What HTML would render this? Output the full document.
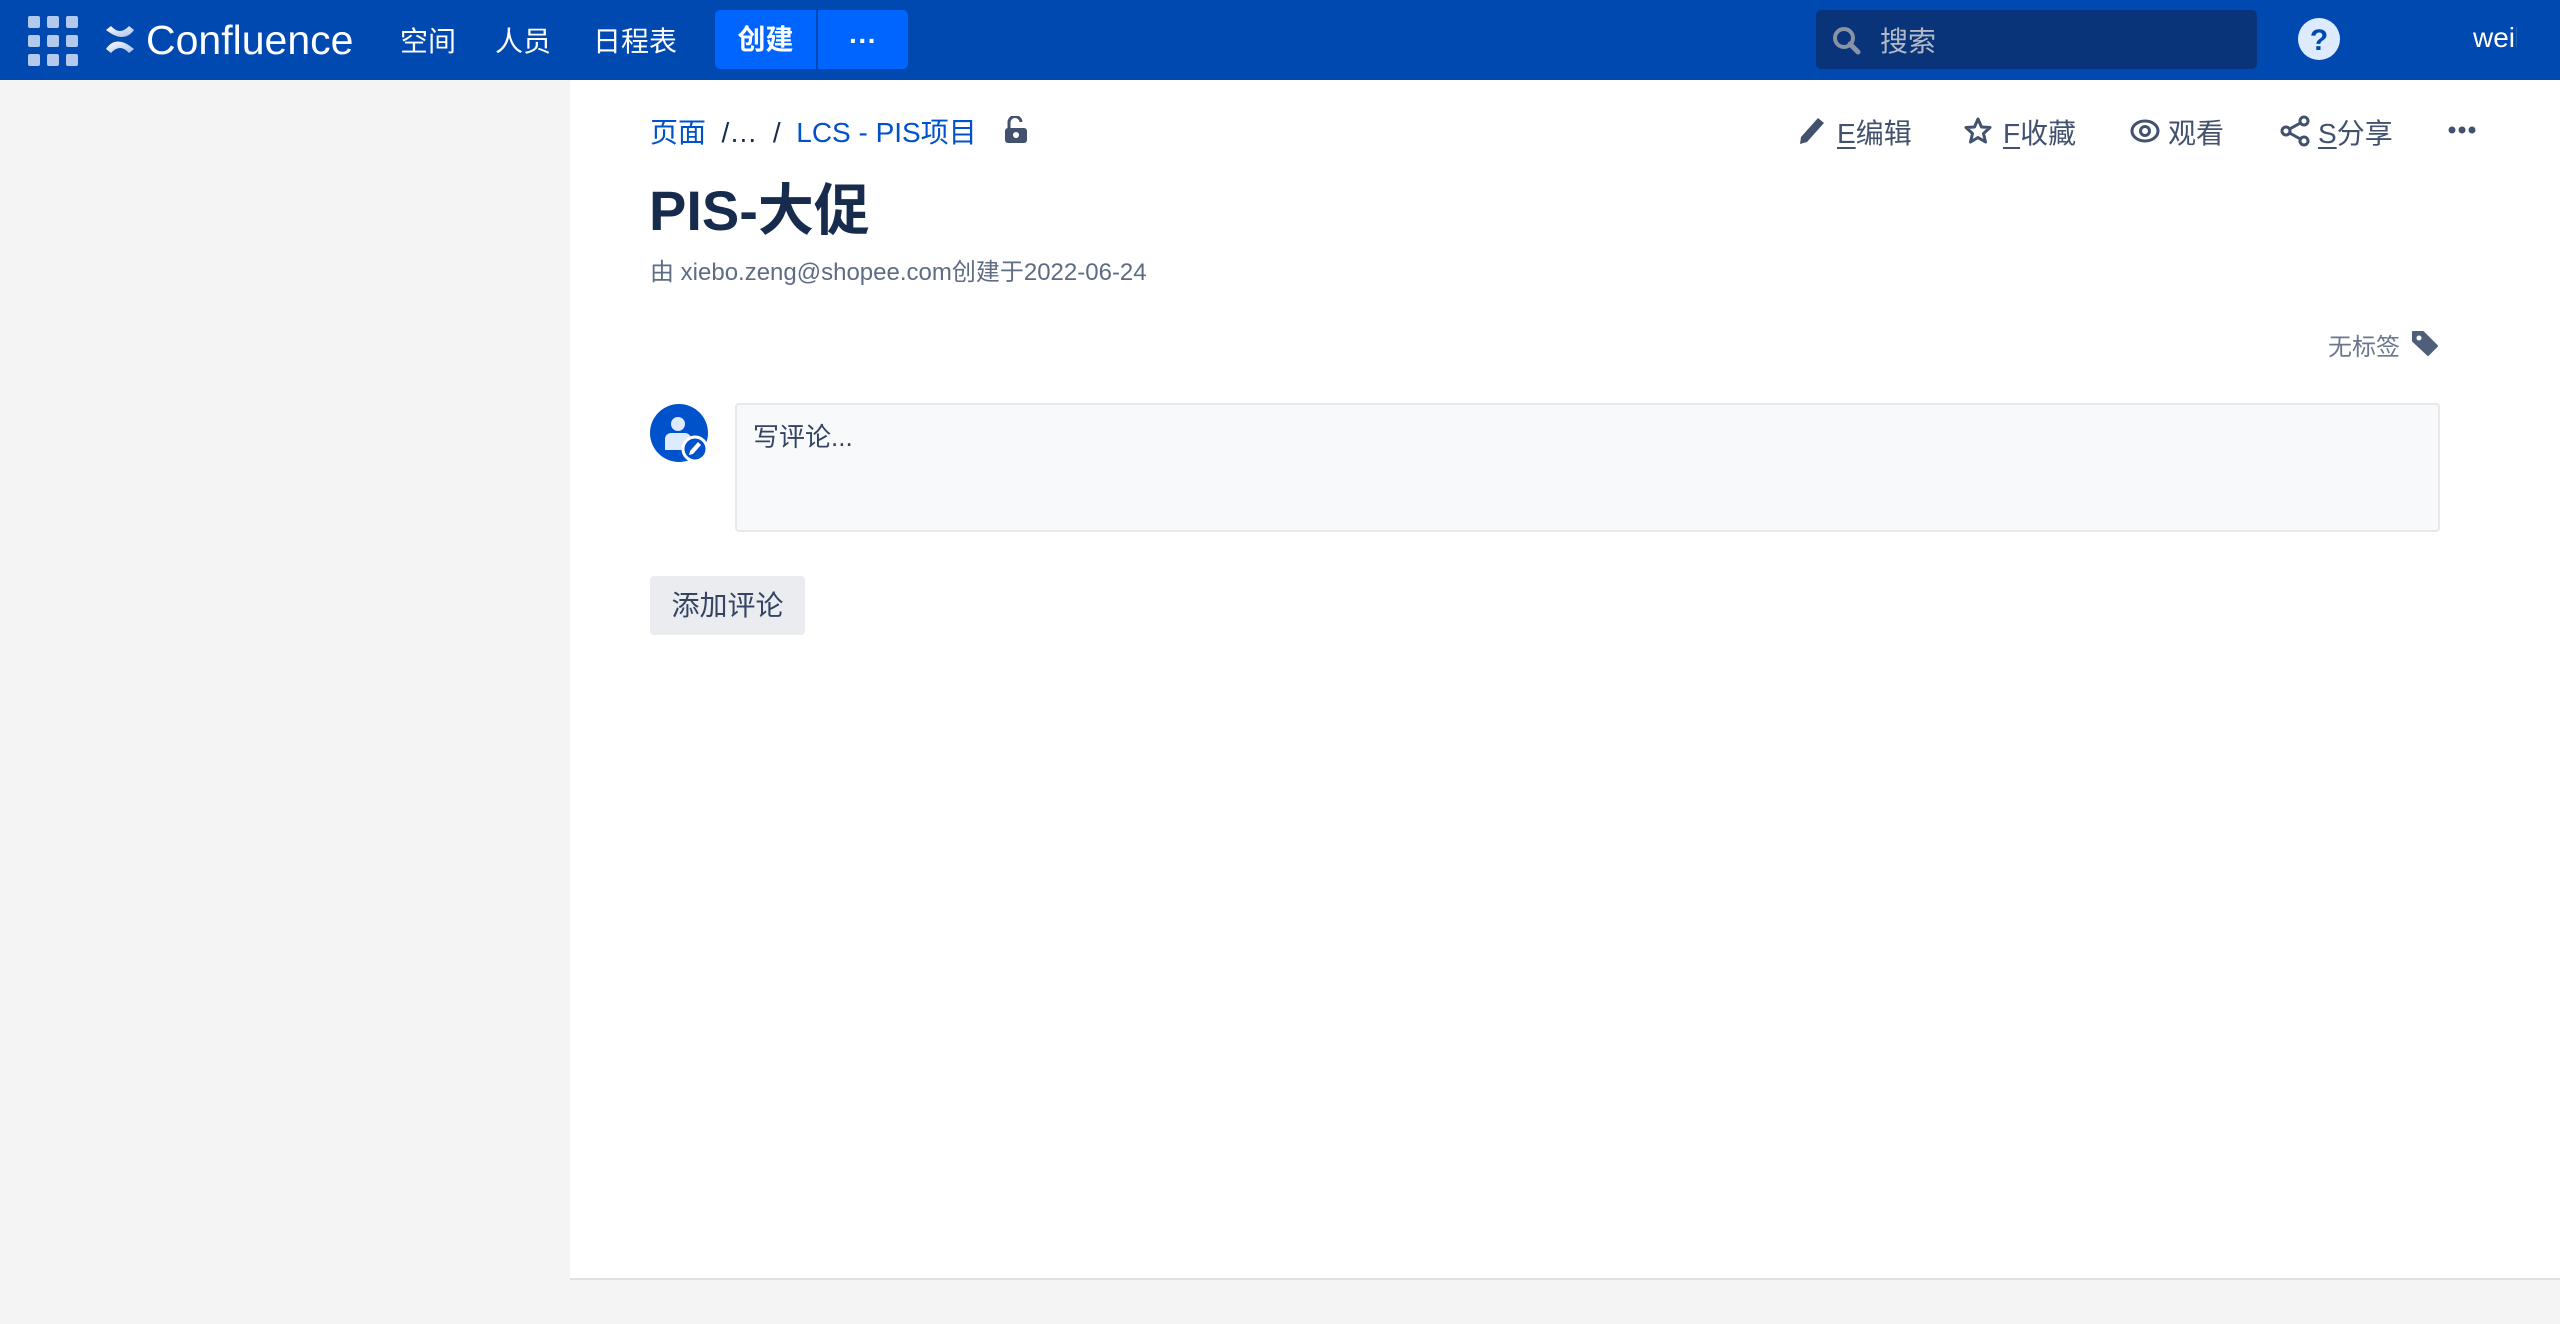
<!DOCTYPE html>
<html><head><meta charset="utf-8"><style>
*{margin:0;padding:0;box-sizing:border-box}
body{width:2560px;height:1324px;background:#f4f4f4;font-family:"Liberation Sans","Noto Sans CJK SC",sans-serif;position:relative;overflow:hidden;color:#172b4d}
.a{position:absolute;white-space:nowrap}
#hdr{position:absolute;left:0;top:0;width:2560px;height:80px;background:#0049b0}
#main{position:absolute;left:570px;top:80px;width:1990px;background:#fff;border-bottom:2px solid #dfe1e6;height:1200px}
.nav{color:#fff;font-size:28px;top:20px}
.act{color:#42526e;font-size:28px;top:112px}
.act u{text-decoration:underline;text-underline-offset:4px}
</style></head><body>
<div id="hdr">
 <svg class="a" style="left:28px;top:16px" width="50" height="50" viewBox="0 0 50 50" fill="#b3c9ee">
  <rect x="0" y="0" width="12" height="12" rx="2"/><rect x="19" y="0" width="12" height="12" rx="2"/><rect x="38" y="0" width="12" height="12" rx="2"/>
  <rect x="0" y="19" width="12" height="12" rx="2"/><rect x="19" y="19" width="12" height="12" rx="2"/><rect x="38" y="19" width="12" height="12" rx="2"/>
  <rect x="0" y="38" width="12" height="12" rx="2"/><rect x="19" y="38" width="12" height="12" rx="2"/><rect x="38" y="38" width="12" height="12" rx="2"/>
 </svg>
 <svg class="a" style="left:104px;top:22px" width="32" height="34" viewBox="0 0 32 34">
  <defs><linearGradient id="g" x1="0" y1="0" x2="1" y2="1"><stop offset="0" stop-color="#fff"/><stop offset="1" stop-color="#a8bde6"/></linearGradient></defs>
  <path d="M2 8 L7 4 Q16 14 25 4 L30 8 Q20 22 2 8Z" fill="url(#g)"/>
  <path d="M2 27 Q12 12 30 27 L25 31 Q16 21 7 31Z" fill="url(#g)"/>
 </svg>
 <div class="a" style="left:146px;top:17px;color:#fff;font-size:41px">Confluence</div>
 <div class="a nav" style="left:400px">空间</div>
 <div class="a nav" style="left:495px">人员</div>
 <div class="a nav" style="left:593px">日程表</div>
 <div class="a" style="left:715px;top:10px;width:101px;height:59px;background:#0065ff;border-radius:5px 0 0 5px;color:#fff;font-size:28px;font-weight:bold;text-align:center;line-height:59px">创建</div>
 <div class="a" style="left:818px;top:10px;width:90px;height:59px;background:#0065ff;border-radius:0 5px 5px 0;color:#fff;font-size:28px;font-weight:bold;text-align:center;line-height:62px">···</div>
 <div class="a" style="left:1816px;top:10px;width:441px;height:59px;background:#09347a;border-radius:5px"></div>
 <svg class="a" style="left:1832px;top:26px" width="30" height="30" viewBox="0 0 30 30"><circle cx="12" cy="12" r="9" fill="none" stroke="#8993a4" stroke-width="4"/><path d="M18 18 L26 26" stroke="#8993a4" stroke-width="5" stroke-linecap="round"/></svg>
 <div class="a" style="left:1880px;top:20px;color:#b3bac5;font-size:28px">搜索</div>
 <svg class="a" style="left:2298px;top:18px" width="42" height="42" viewBox="0 0 42 42"><circle cx="21" cy="21" r="21" fill="#deebff"/><text x="21" y="32" text-anchor="middle" font-size="30" font-weight="bold" fill="#0049b0" font-family="Liberation Sans">?</text></svg>
 <div class="a" style="left:2473px;top:22px;color:#fff;font-size:28px;width:44px;overflow:hidden">weil</div>
</div>
<div id="main"></div>
<div class="a" style="left:650px;top:111px;font-size:28px;color:#0052cc">页面 <span style="color:#172b4d">&nbsp;/…&nbsp; /</span>&nbsp; LCS - PIS项目</div>
<svg class="a" style="left:1003px;top:116px" width="26" height="28" viewBox="0 0 26 28"><path d="M6 12 V7 a6 6 0 0 1 12 -1" fill="none" stroke="#42526e" stroke-width="3"/><rect x="2" y="12" width="22" height="15" rx="3" fill="#42526e"/><circle cx="13" cy="19" r="3" fill="#fff"/></svg>
<svg class="a" style="left:1798px;top:116px" width="28" height="30" viewBox="0 0 28 30"><path d="M20 2 L26 7 L9 26 L2 28 L3 21Z" fill="#42526e"/></svg>
<div class="a act" style="left:1837px"><u>E</u>编辑</div>
<svg class="a" style="left:1963px;top:116px" width="30" height="30" viewBox="0 0 30 30"><path d="M15 3 L18.5 11 L27 11.5 L20.5 17.5 L22.5 26 L15 21.5 L7.5 26 L9.5 17.5 L3 11.5 L11.5 11Z" fill="none" stroke="#42526e" stroke-width="3" stroke-linejoin="round"/></svg>
<div class="a act" style="left:2003px"><u>F</u>收藏</div>
<svg class="a" style="left:2130px;top:118px" width="30" height="26" viewBox="0 0 30 26"><ellipse cx="15" cy="13" rx="13" ry="10" fill="none" stroke="#42526e" stroke-width="3"/><circle cx="15" cy="13" r="4.5" fill="none" stroke="#42526e" stroke-width="3"/></svg>
<div class="a act" style="left:2168px">观看</div>
<svg class="a" style="left:2280px;top:115px" width="30" height="32" viewBox="0 0 30 32"><path d="M24 6 L6 16 L24 26" fill="none" stroke="#42526e" stroke-width="3"/><circle cx="24" cy="6" r="4" fill="#fff" stroke="#42526e" stroke-width="3"/><circle cx="6" cy="16" r="4" fill="#fff" stroke="#42526e" stroke-width="3"/><circle cx="24" cy="26" r="4" fill="#fff" stroke="#42526e" stroke-width="3"/></svg>
<div class="a act" style="left:2318px"><u>S</u>分享</div>
<svg class="a" style="left:2448px;top:125px" width="28" height="10" viewBox="0 0 28 10" fill="#42526e"><circle cx="4" cy="5" r="3.5"/><circle cx="14" cy="5" r="3.5"/><circle cx="24" cy="5" r="3.5"/></svg>
<div class="a" style="left:649px;top:166px;font-size:56px;font-weight:bold;color:#172b4d">PIS-大促</div>
<div class="a" style="left:650px;top:252px;font-size:24px;color:#5e6c84">由 xiebo.zeng@shopee.com创建于2022-06-24</div>
<div class="a" style="left:2328px;top:327px;font-size:24px;color:#6b778c">无标签</div>
<svg class="a" style="left:2410px;top:329px" width="30" height="28" viewBox="0 0 30 28"><path d="M3 3 H13 L27 17 L18 26 L3 12Z" fill="#505f79" stroke="#505f79" stroke-width="2" stroke-linejoin="round"/><circle cx="9" cy="9" r="2.5" fill="#fff"/></svg>
<svg class="a" style="left:650px;top:404px" width="60" height="60" viewBox="0 0 60 60"><circle cx="29" cy="29" r="29" fill="#0052cc"/><circle cx="28" cy="20" r="7" fill="#deebff"/><path d="M15 46 V35 a6 6 0 0 1 6 -6 H35 a6 6 0 0 1 6 6 V46Z" fill="#deebff"/><circle cx="45" cy="45" r="12" fill="#0052cc" stroke="#fff" stroke-width="3"/><path d="M48 38 L51 41 L43 50 L39 51 L40 47Z" fill="#fff"/></svg>
<div class="a" style="left:735px;top:403px;width:1705px;height:129px;background:#f8f9fb;border:2px solid #e6e8ec;border-radius:4px"></div>
<div class="a" style="left:753px;top:417px;font-size:26px;color:#344563">写评论...</div>
<div class="a" style="left:650px;top:576px;width:155px;height:59px;background:#ebecf0;border-radius:4px;font-size:28px;color:#344563;text-align:center;line-height:59px">添加评论</div>
</body></html>
